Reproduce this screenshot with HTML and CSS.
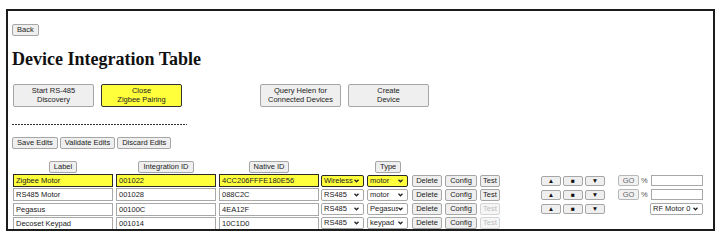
FILE: index.html
```html
<!DOCTYPE html>
<html lang="en">
<head>
    <meta charset="UTF-8">
    <title>Device Integration Table</title>
    <link rel="stylesheet" href="styles.css">
</head>
<body>
    <div class="frame">
        <div><button class="btn">Back</button></div>
        <h1>Device Integration Table</h1>

        <div class="actions">
            <button class="btn btn-big">Start RS-485<br>Discovery</button>
            <button class="btn btn-big active">Close<br>Zigbee Pairing</button>
            <button class="btn btn-big query">Query Helen for<br>Connected Devices</button>
            <button class="btn btn-big">Create<br>Device</button>
        </div>

        <div class="divider"></div>

        <div class="edit-bar">
            <button class="btn">Save Edits</button>
            <button class="btn">Validate Edits</button>
            <button class="btn">Discard Edits</button>
        </div>

        <div class="device-table">
            <div class="head-row">
                <div class="head-cell"><button class="btn">Label</button></div>
                <div class="head-cell"><button class="btn">Integration ID</button></div>
                <div class="head-cell native"><button class="btn">Native ID</button></div>
                <div class="head-type"><button class="btn">Type</button></div>
            </div>

            <!-- Zigbee device is highlighted while pairing is open -->
            <div class="dev-row">
                <input class="field hl" type="text" value="Zigbee Motor">
                <input class="field hl" type="text" value="001022">
                <input class="field native hl" type="text" value="4CC206FFFE180E56">
                <select class="sel sel-proto hl"><option>Wireless</option></select>
                <select class="sel sel-type hl"><option>motor</option></select>
                <button class="btn btn-del">Delete</button>
                <button class="btn btn-cfg">Config</button>
                <button class="btn btn-test">Test</button>
                <button class="btn arrow">&#9650;</button>
                <button class="btn arrow">&#9632;</button>
                <button class="btn arrow down">&#9660;</button>
                <div class="motor">
                    <button class="btn go">GO</button>
                    <span class="pct">%</span>
                    <input class="level" type="text">
                </div>
            </div>
            <div class="dev-row">
                <input class="field" type="text" value="RS485 Motor">
                <input class="field" type="text" value="001028">
                <input class="field native" type="text" value="088C2C">
                <select class="sel sel-proto"><option>RS485</option></select>
                <select class="sel sel-type"><option>motor</option></select>
                <button class="btn btn-del">Delete</button>
                <button class="btn btn-cfg">Config</button>
                <button class="btn btn-test">Test</button>
                <button class="btn arrow">&#9650;</button>
                <button class="btn arrow">&#9632;</button>
                <button class="btn arrow down">&#9660;</button>
                <div class="motor">
                    <button class="btn go">GO</button>
                    <span class="pct">%</span>
                    <input class="level" type="text">
                </div>
            </div>
            <div class="dev-row">
                <input class="field" type="text" value="Pegasus">
                <input class="field" type="text" value="00100C">
                <input class="field native" type="text" value="4EA12F">
                <select class="sel sel-proto"><option>RS485</option></select>
                <select class="sel sel-type"><option>Pegasus</option></select>
                <button class="btn btn-del">Delete</button>
                <button class="btn btn-cfg">Config</button>
                <button class="btn btn-test" disabled>Test</button>
                <button class="btn arrow">&#9650;</button>
                <button class="btn arrow">&#9632;</button>
                <button class="btn arrow down">&#9660;</button>
                <div class="motor">
                    <select class="sel sel-motor"><option>RF Motor 0</option></select>
                </div>
            </div>
            <div class="dev-row">
                <input class="field" type="text" value="Decoset Keypad">
                <input class="field" type="text" value="001014">
                <input class="field native" type="text" value="10C1D0">
                <select class="sel sel-proto"><option>RS485</option></select>
                <select class="sel sel-type"><option>keypad</option></select>
                <button class="btn btn-del">Delete</button>
                <button class="btn btn-cfg">Config</button>
                <button class="btn btn-test" disabled>Test</button>
            </div>
        </div>
    </div>
</body>
</html>
```

FILE: styles.css
```css
body {
    margin: 0;
    font-family: "Liberation Sans", Arial, sans-serif;
    font-size: 7.5px;
    color: #222;
    background: #fff;
}
.frame {
    box-sizing: border-box;
    width: 709px;
    height: 222px;
    margin: 9px 0 0 6px;
    padding: 13px 4px 0;
    border: 2px solid #1c1c1c;
    overflow: hidden;
}
.btn {
    box-sizing: border-box;
    height: 12px;
    margin: 0;
    padding: 0 4px;
    font-family: inherit;
    font-size: 7.5px;
    line-height: 10px;
    color: #222;
    background: #efefef;
    border: 1px solid #a6a6a6;
    border-radius: 2px;
    cursor: pointer;
}
.btn:disabled {
    color: #bdbdbd;
    background: #f6f6f6;
    border-color: #d4d4d4;
    cursor: default;
}
h1 {
    margin: 13px 0 15px;
    font-family: "Liberation Serif", "Times New Roman", serif;
    font-size: 18px;
    line-height: 20px;
    font-weight: bold;
    color: #111;
}
.actions {
    display: flex;
    gap: 7px;
    margin-left: 1px;
}
.btn-big {
    width: 81px;
    height: 23px;
    padding: 0;
    line-height: 8.6px;
}
.btn-big.active {
    background: #ffff3c;
    border-color: #333;
}
.btn-big.query {
    margin-left: 71px;
}
.divider {
    width: 175px;
    height: 1px;
    margin-top: 17px;
    background: repeating-linear-gradient(to right, #333 0 2px, transparent 2px 3px);
}
.edit-bar {
    display: flex;
    gap: 2px;
    margin-top: 12px;
}
.device-table {
    margin-top: 12px;
    margin-left: 1px;
}
.head-row {
    display: flex;
    height: 12px;
}
.head-cell {
    display: flex;
    justify-content: center;
    width: 100px;
    margin-right: 3px;
}
.head-cell.native {
    margin-right: 2px;
}
.head-type {
    padding-left: 54px;
}
.dev-row {
    display: flex;
    align-items: center;
    height: 13px;
    margin-top: 1px;
}
.dev-row + .dev-row {
    margin-top: 1.3px;
}
.field {
    box-sizing: border-box;
    width: 100px;
    height: 13px;
    margin: 0 3px 0 0;
    padding: 0 2px;
    font-family: inherit;
    font-size: 7.5px;
    color: #222;
    background: #fff;
    border: 1px solid #a8a8a8;
    outline: none;
}
.field.native {
    margin-right: 2px;
}
.hl {
    background-color: #ffff3c;
    border-color: #2a2a2a;
}
.sel {
    -webkit-appearance: none;
    appearance: none;
    box-sizing: border-box;
    height: 12px;
    margin: 0;
    padding: 0 9px 0 2px;
    font-family: inherit;
    font-size: 7.5px;
    line-height: 10px;
    color: #222;
    background-color: #fff;
    background-image: url("data:image/svg+xml,%3Csvg xmlns='http://www.w3.org/2000/svg' width='5' height='4' viewBox='0 0 5 4'%3E%3Cpath d='M0.5 0.8 L2.5 2.8 L4.5 0.8' fill='none' stroke='%23222' stroke-width='1.3'/%3E%3C/svg%3E");
    background-repeat: no-repeat;
    background-position: right 4px center;
    border: 1px solid #a8a8a8;
    border-radius: 2px;
}
.sel.hl {
    background-color: #ffff3c;
    border-color: #2a2a2a;
}
.sel-proto {
    width: 43px;
    margin-right: 3px;
}
.sel-type {
    width: 41px;
    margin-right: 4px;
}
.btn-del {
    width: 30px;
    padding: 0;
    margin-right: 3px;
}
.btn-cfg {
    width: 32px;
    padding: 0;
    margin-right: 3px;
}
.btn-test {
    width: 20px;
    padding: 0;
    margin-right: 41px;
}
.arrow {
    width: 20px;
    height: 10px;
    padding: 0;
    margin-right: 2px;
    font-size: 6.5px;
    line-height: 8px;
    color: #111;
}
.arrow.down {
    margin-right: 12px;
}
.motor {
    display: flex;
    align-items: center;
    justify-content: flex-end;
    width: 86px;
}
.go {
    width: 21px;
    height: 11px;
    padding: 0;
    color: #666;
    background: #f2f2f2;
    border-color: #b8b8b8;
}
.pct {
    width: 8px;
    margin: 0 2px;
    color: #555;
}
.level {
    box-sizing: border-box;
    width: 52px;
    height: 11px;
    margin: 0;
    padding: 0 2px;
    font-size: 7.5px;
    border: 1px solid #a8a8a8;
    outline: none;
}
.sel-motor {
    width: 53px;
}
```
